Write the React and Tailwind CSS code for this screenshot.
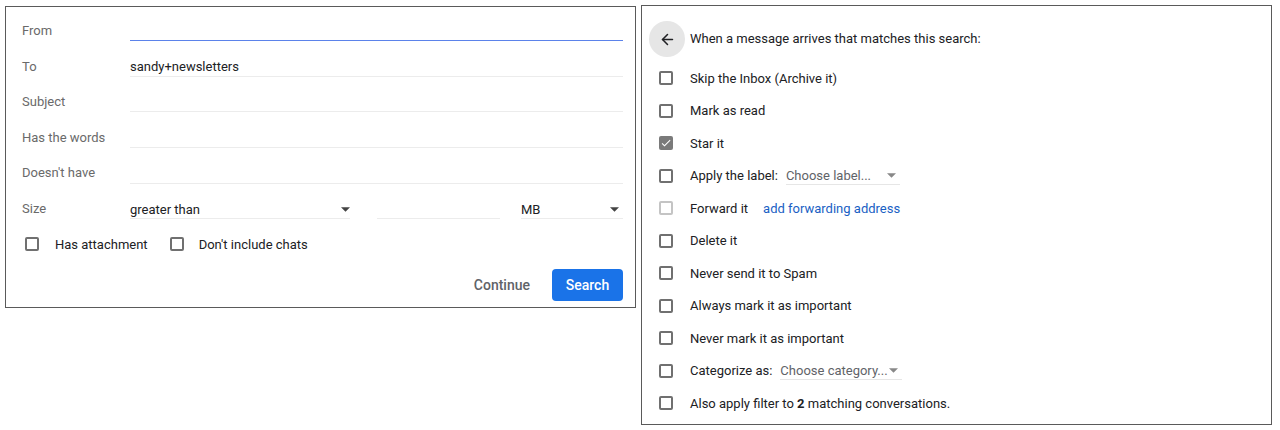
import { ArrowLeft } from 'lucide-react';

const font = { fontFamily: 'Roboto, "Liberation Sans", sans-serif' };

function Caret({ className = 'text-[#444]' }) {
  return (
    <svg className={className} width="9" height="5" viewBox="0 0 10 5" fill="currentColor">
      <polygon points="0,0 10,0 5,5" />
    </svg>
  );
}

function Box({ checked = false, disabled = false, className = '' }) {
  if (checked) {
    return (
      <span className={`flex h-[14px] w-[14px] shrink-0 items-center justify-center rounded-[2px] bg-[#7a7a7a] ${className}`}>
        <svg width="12" height="12" viewBox="0 0 24 24" fill="#fff">
          <path d="M9 16.17L4.83 12l-1.42 1.41L9 19 21 7l-1.41-1.41z" />
        </svg>
      </span>
    );
  }
  return (
    <span
      className={`block h-[14px] w-[14px] shrink-0 rounded-[2px] border-2 ${
        disabled ? 'border-[#c4c4c4]' : 'border-[#707070]'
      } ${className}`}
    />
  );
}

// text input drawn as a value over a thin underline
function Line({ children, focused, className = '' }) {
  return (
    <div className={`mt-[2px] flex flex-col ${className}`}>
      <div className="flex h-[18px] items-center justify-between text-[#202124]">{children}</div>
      <div className={`h-px ${focused ? 'bg-[#5b82ea]' : 'bg-[#ececec]'}`} />
    </div>
  );
}

function Field({ label, value, focused }) {
  return (
    <div className="flex h-[35.6px] items-center">
      <span className="w-[108px] shrink-0 text-[#6a6a6a]">{label}</span>
      <Line focused={focused} className="flex-1">
        <span>{value}</span>
      </Line>
    </div>
  );
}

function SearchForm() {
  return (
    <div className="flex h-[302px] w-[631px] shrink-0 flex-col border border-[#5a5a5a] pl-[16px] pr-[12px] pt-[6px] text-[13px]">
      <Field label="From" focused />
      <Field label="To" value="sandy+newsletters" />
      <Field label="Subject" />
      <Field label="Has the words" />
      <Field label="Doesn't have" />

      {/* size: comparator, number, unit */}
      <div className="flex h-[35.6px] items-center">
        <span className="w-[108px] shrink-0 text-[#6a6a6a]">Size</span>
        <Line className="w-[225px] pr-[5px]">
          <span>greater than</span>
          <Caret />
        </Line>
        <Line className="ml-[22px] w-[123px]" />
        <Line className="ml-[21px] flex-1">
          <span>MB</span>
          <span className="pr-[4px]">
            <Caret />
          </span>
        </Line>
      </div>

      <div className="flex h-[35.6px] items-center pl-[3px] text-[#202124]">
        <Box />
        <span className="ml-[16px]">Has attachment</span>
        <Box className="ml-[22px]" />
        <span className="ml-[15px]">Don't include chats</span>
      </div>

      <div className="mt-[7px] flex items-center justify-end">
        <button className="mr-[10px] h-8 px-3 text-[14px] font-medium text-[#5f6368]">Continue</button>
        <button className="h-8 w-[71px] rounded-[4px] bg-[#1a73e8] text-[14px] font-medium text-white">
          Search
        </button>
      </div>
    </div>
  );
}

function Dropdown({ text, width }) {
  return (
    <span
      className="ml-[8px] flex h-[18px] items-center justify-between border-b border-b-[#e6e6e6] pr-[4px] text-[#5f6368]"
      style={{ width }}
    >
      <span>{text}</span>
      <Caret className="text-[#888]" />
    </span>
  );
}

const actions = [
  { text: 'Skip the Inbox (Archive it)' },
  { text: 'Mark as read' },
  { text: 'Star it', checked: true },
  { text: 'Apply the label:', extra: <Dropdown text="Choose label..." width={114} /> },
  {
    text: 'Forward it',
    disabled: true,
    extra: <span className="ml-[15px] text-[#1a5fc4]">add forwarding address</span>,
  },
  { text: 'Delete it' },
  { text: 'Never send it to Spam' },
  { text: 'Always mark it as important' },
  { text: 'Never mark it as important' },
  { text: 'Categorize as:', extra: <Dropdown text="Choose category..." width={122} /> },
];

function FilterActions() {
  return (
    <div className="flex h-[420px] w-[631px] shrink-0 flex-col border border-[#5a5a5a] pt-[15px] text-[13px] text-[#202124]">
      <div className="flex h-9 items-center pl-[7px]">
        <button className="flex h-9 w-9 items-center justify-center rounded-full bg-[#e6e6e6]">
          <ArrowLeft size={17} strokeWidth={2.2} color="#202124" />
        </button>
        <span className="ml-[5px]">When a message arrives that matches this search:</span>
      </div>

      <div className="mt-[5px] flex flex-col pl-[17px]">
        {actions.map((a) => (
          <div key={a.text} className="flex h-[32.5px] items-center">
            <Box checked={a.checked} disabled={a.disabled} />
            <span className="ml-[17px]">{a.text}</span>
            {a.extra}
          </div>
        ))}
        <div className="flex h-[32.5px] items-center">
          <Box />
          <span className="ml-[17px]">
            Also apply filter to <b className="font-bold">2</b> matching conversations.
          </span>
        </div>
      </div>
    </div>
  );
}

export default function App() {
  return (
    <div className="flex h-[430px] w-[1280px] items-start bg-white" style={font}>
      <div className="ml-[5px] mt-[6px]">
        <SearchForm />
      </div>
      <div className="ml-[5px] mt-[5px]">
        <FilterActions />
      </div>
    </div>
  );
}
